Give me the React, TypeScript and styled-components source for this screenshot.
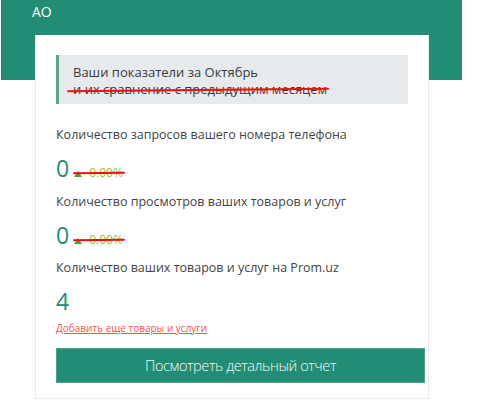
import React from "react";
import styled, { createGlobalStyle } from "styled-components";

const GlobalStyle = createGlobalStyle`
  html, body {
    margin: 0;
    padding: 0;
    background: #ffffff;
  }
  body {
    font-family: "Open Sans", "Noto Sans", sans-serif;
  }
`;

const Page = styled.div`
  width: 500px;
  height: 411px;
  overflow: hidden;
  background: #ffffff;
`;

const Header = styled.header`
  box-sizing: border-box;
  width: 461px;
  height: 80px;
  margin-left: 1px;
  padding: 3px 0 0 31px;
  background: #228c75;
  color: #ffffff;
  font-size: 14px;
  line-height: 18px;
`;

const Card = styled.section`
  position: relative;
  box-sizing: border-box;
  width: 394px;
  margin: -45px 0 0 35px;
  padding: 20px 20px 15px 20px;
  background: #ffffff;
  border: 1px solid #ececec;
  border-top: none;
`;

const Notice = styled.div`
  box-sizing: border-box;
  height: 49px;
  padding: 9px 0 0 14px;
  background: #e6eaed;
  border-left: 3px solid #5aa48f;
  color: #3a3a3a;
  font-size: 13px;
  line-height: 17px;
`;

type StrikeProps = { $left: number; $right: number; $top: number };

/* red hand-drawn style strike over a piece of text */
const Crossed = styled.span<StrikeProps>`
  position: relative;
  display: inline-block;

  &::after {
    content: "";
    position: absolute;
    left: ${(p) => p.$left}px;
    right: ${(p) => p.$right}px;
    top: ${(p) => p.$top}px;
    height: 2px;
    background: #ff0a0a;
    border-radius: 1px;
    transform: rotate(-0.5deg);
  }
`;

const Metric = styled.div<{ $gap: number }>`
  margin-top: ${(p) => p.$gap}px;
`;

const Label = styled.div`
  color: #444444;
  font-size: 12.5px;
  line-height: 18px;
`;

const ValueRow = styled.div`
  display: flex;
  align-items: baseline;
  gap: 5px;
  margin-top: 9px;
  height: 30px;
`;

const Value = styled.span`
  color: #228c75;
  font-size: 23px;
  font-weight: 500;
  line-height: 30px;
`;

const Change = styled(Crossed)`
  color: #8cc63f;
  font-size: 12px;
  line-height: 14px;
`;

const Arrow = styled.svg`
  width: 8px;
  height: 6px;
  margin-right: 7px;
  vertical-align: 0px;
`;

const AddLink = styled.a`
  display: block;
  margin-top: 5px;
  color: #ff4d4d;
  font-size: 10px;
  line-height: 14px;
  text-decoration: underline;
  cursor: pointer;
`;

const ReportButton = styled.button`
  display: block;
  box-sizing: border-box;
  width: 369px;
  height: 35px;
  margin-top: 13px;
  padding: 0;
  border: 1px solid #4ba38c;
  background: #228c75;
  color: #f4faf8;
  font-family: "Open Sans", "Noto Sans", sans-serif;
  font-size: 14.5px;
  font-weight: 300;
  letter-spacing: -0.4px;
  cursor: pointer;
`;

function ChangeBadge() {
  return (
    <Change $left={-1} $right={-2} $top={6}>
      <Arrow viewBox="0 0 8 6">
        <path d="M4 0 L8 6 L0 6 Z" fill="#3fa535" />
      </Arrow>
      0.00%
    </Change>
  );
}

export default function App() {
  return (
    <Page>
      <GlobalStyle />
      <Header>АО</Header>
      <Card>
        <Notice>
          Ваши показатели за Октябрь
          <br />
          <Crossed $left={-6} $right={-2} $top={8}>
            и их сравнение с предыдущим месяцем
          </Crossed>
        </Notice>

        <Metric $gap={22}>
          <Label>Количество запросов вашего номера телефона</Label>
          <ValueRow>
            <Value>0</Value>
            <ChangeBadge />
          </ValueRow>
        </Metric>

        <Metric $gap={10}>
          <Label>Количество просмотров ваших товаров и услуг</Label>
          <ValueRow>
            <Value>0</Value>
            <ChangeBadge />
          </ValueRow>
        </Metric>

        <Metric $gap={9}>
          <Label>Количество ваших товаров и услуг на Prom.uz</Label>
          <ValueRow>
            <Value>4</Value>
          </ValueRow>
        </Metric>

        <AddLink>Добавить еще товары и услуги</AddLink>
        <ReportButton>Посмотреть детальный отчет</ReportButton>
      </Card>
    </Page>
  );
}
